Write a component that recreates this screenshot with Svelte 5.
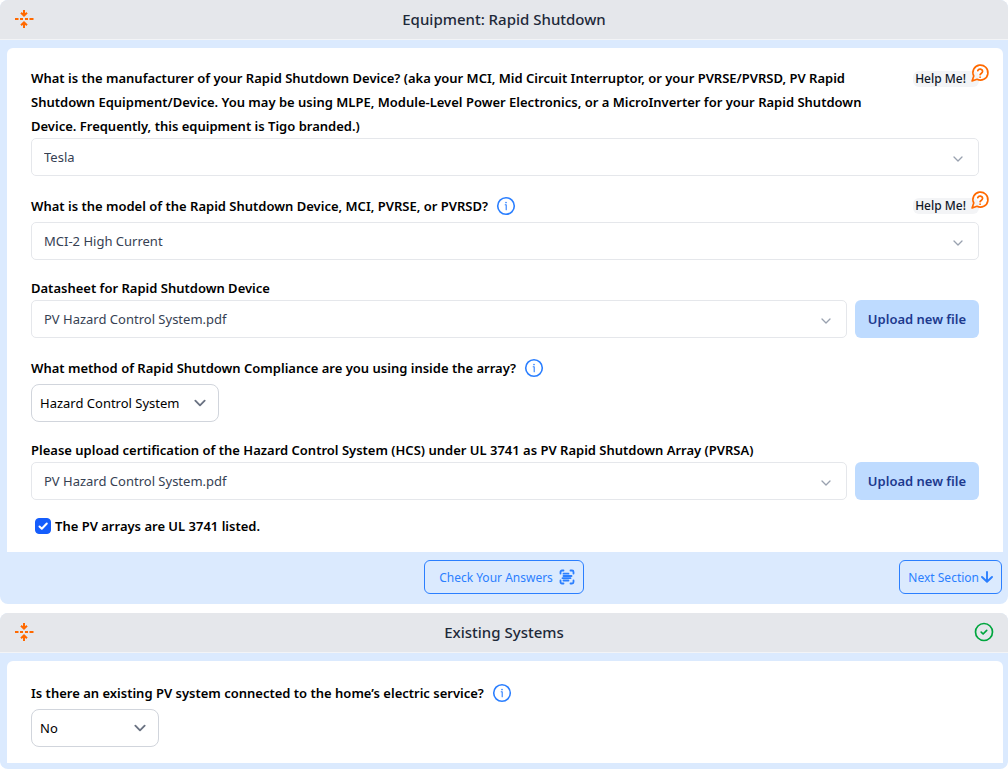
<script lang="ts">
	let manufacturer = $state('Tesla');
	let model = $state('MCI-2 High Current');
	let datasheet = $state('PV Hazard Control System.pdf');
	let method = $state('Hazard Control System');
	let certification = $state('PV Hazard Control System.pdf');
	let arraysListed = $state(true);
	let existingSystem = $state('No');
</script>

{#snippet chevron()}
	<svg class="chevron" viewBox="0 0 12 12" aria-hidden="true">
		<path d="M2 4l4 4 4-4" />
	</svg>
{/snippet}

{#snippet info()}
	<button class="icon-button" type="button" aria-label="More information">
		<svg class="info" viewBox="0 0 20 20">
			<circle cx="10" cy="10" r="8.3" />
			<path d="M9.2 8.8h1v5" />
			<circle class="dot" cx="10" cy="6.6" r="0.8" />
		</svg>
	</button>
{/snippet}

{#snippet help()}
	<button class="help" type="button">
		Help Me!
		<svg viewBox="0 0 24 24" aria-hidden="true">
			<path d="M7.9 20A9 9 0 1 0 4 16.1L2 22Z" transform="translate(0.5 -0.5)" />
			<path d="M9.3 9.2a3 3 0 0 1 5.8 1c0 2-3 2.6-3 4" />
			<path d="M12.1 17h.01" />
		</svg>
	</button>
{/snippet}

{#snippet collapse()}
	<button class="icon-button collapse" type="button" aria-label="Collapse section">
		<svg viewBox="0 0 20 20">
			<path d="M1 10h3.5M6 10h3M11 10h3M15.5 10H19.500" />
			<path d="M10 1v5M7 3.800l3 2.800 3-2.800M10 19v-5M7 16.200l3-2.800 3 2.800" />
		</svg>
	</button>
{/snippet}

<main>
	<section>
		<header>
			{@render collapse()}
			<h2>Equipment: Rapid Shutdown</h2>
		</header>

		<div class="card">
			<div class="field">
				<div class="question">
					<label for="manufacturer">What is the manufacturer of your Rapid Shutdown Device? (aka your MCI, Mid Circuit Interruptor, or your PVRSE/PVRSD, PV Rapid Shutdown Equipment/Device. You may be using MLPE, Module-Level Power Electronics, or a MicroInverter for your Rapid Shutdown Device. Frequently, this equipment is Tigo branded.)</label>
					{@render help()}
				</div>
				<div class="select">
					<select id="manufacturer" bind:value={manufacturer}>
						<option>Tesla</option>
					</select>
					{@render chevron()}
				</div>
			</div>

			<div class="field">
				<div class="question with-info">
					<label for="model">What is the model of the Rapid Shutdown Device, MCI, PVRSE, or PVRSD?</label>
					{@render info()}
					{@render help()}
				</div>
				<div class="select">
					<select id="model" bind:value={model}>
						<option>MCI-2 High Current</option>
					</select>
					{@render chevron()}
				</div>
			</div>

			<div class="field">
				<div class="question">
					<label for="datasheet">Datasheet for Rapid Shutdown Device</label>
				</div>
				<div class="file-row">
					<div class="select">
						<select id="datasheet" bind:value={datasheet}>
							<option>PV Hazard Control System.pdf</option>
						</select>
						{@render chevron()}
					</div>
					<button class="upload" type="button">Upload new file</button>
				</div>
			</div>

			<div class="field">
				<div class="question with-info">
					<label for="method">What method of Rapid Shutdown Compliance are you using inside the array?</label>
					{@render info()}
				</div>
				<div class="select compact">
					<select id="method" bind:value={method}>
						<option>Hazard Control System</option>
					</select>
					{@render chevron()}
				</div>
			</div>

			<div class="field">
				<div class="question">
					<label for="certification">Please upload certification of the Hazard Control System (HCS) under UL 3741 as PV Rapid Shutdown Array (PVRSA)</label>
				</div>
				<div class="file-row">
					<div class="select">
						<select id="certification" bind:value={certification}>
							<option>PV Hazard Control System.pdf</option>
						</select>
						{@render chevron()}
					</div>
					<button class="upload" type="button">Upload new file</button>
				</div>
			</div>

			<div class="field check">
				<span class="tick-box">
					<input id="arrays-listed" type="checkbox" bind:checked={arraysListed} />
					<svg viewBox="0 0 16 16" aria-hidden="true">
						<path d="M4.500 8.500l2.300 2.300 5-5.300" />
					</svg>
				</span>
				<label for="arrays-listed">The PV arrays are UL 3741 listed.</label>
			</div>
		</div>

		<footer>
			<button class="outline check-answers" type="button">
				Check Your Answers
				<svg viewBox="0 0 16 16" aria-hidden="true">
					<path d="M1.500 4.500V3A1.500 1.500 0 0 1 3 1.500h1.500M11.500 1.500H13A1.500 1.500 0 0 1 14.500 3v1.500M14.500 11.500V13a1.500 1.500 0 0 1-1.500 1.500h-1.500M4.500 14.500H3A1.500 1.500 0 0 1 1.500 13v-1.500" />
					<path d="M4.500 4.700h5M4.500 7h8M3.500 9.200h8M4.500 11.500h5" />
				</svg>
			</button>
			<button class="outline next" type="button">
				Next Section
				<svg viewBox="0 0 12 12" aria-hidden="true">
					<path d="M6 1v9.500M1 6l5 4.800L11 6" />
				</svg>
			</button>
		</footer>
	</section>

	<section>
		<header>
			{@render collapse()}
			<h2>Existing Systems</h2>
			<svg class="complete" viewBox="0 0 20 20" role="img" aria-label="Section complete">
				<circle cx="10" cy="10" r="8.500" />
				<path d="M7.200 10.200l1.900 1.800 3.600-3.600" />
			</svg>
		</header>

		<div class="card">
			<div class="field">
				<div class="question with-info">
					<label for="existing">Is there an existing PV system connected to the home’s electric service?</label>
					{@render info()}
				</div>
				<div class="select compact short">
					<select id="existing" bind:value={existingSystem}>
						<option>No</option>
						<option>Yes</option>
					</select>
					{@render chevron()}
				</div>
			</div>
		</div>
		<div class="section-end"></div>
	</section>
</main>

<style>
	:global(body) {
		background: #fff;
	}

	main {
		display: flex;
		flex-direction: column;
		gap: 9px;
		font-family: 'Segoe UI', 'Noto Sans', sans-serif;
		font-size: 13px;
		color: #000;
	}

	section {
		background: #dbeafe;
		border-radius: 8px;
		overflow: hidden;
	}

	header {
		display: grid;
		grid-template-columns: 20px 1fr 20px;
		align-items: center;
		box-sizing: border-box;
		height: 40px;
		padding: 0 14px;
		background: #e5e7eb;
		border-bottom: 1px solid #f3f4f6;
	}

	h2 {
		margin: 0;
		padding-bottom: 2px;
		font-size: 15px;
		font-weight: 500;
		line-height: 24px;
		text-align: center;
		color: #1e2939;
	}

	button,
	select {
		font: inherit;
	}

	button {
		cursor: pointer;
	}

	svg {
		fill: none;
		stroke: currentColor;
		stroke-linecap: round;
		stroke-linejoin: round;
	}

	.icon-button {
		display: flex;
		padding: 0;
		border: 0;
		background: none;
		color: #2b7fff;
	}

	.icon-button svg {
		width: 20px;
		height: 20px;
	}

	.collapse {
		margin-bottom: 2px;
		color: #ff6900;
	}

	.collapse svg {
		stroke-width: 2;
		stroke-linecap: butt;
		stroke-linejoin: miter;
	}

	.info {
		stroke-width: 1.6;
	}

	.info path {
		stroke-width: 1.1;
	}

	.info .dot {
		fill: currentColor;
		stroke: none;
	}

	.complete {
		width: 20px;
		height: 20px;
		margin-bottom: 2px;
		color: #00a63e;
		stroke-width: 1.7;
	}

	.card {
		display: flex;
		flex-direction: column;
		gap: 16px;
		margin: 8px 5px 0 7px;
		padding: 18px 24px 16px;
		background: #fff;
		border-radius: 6px 6px 0 0;
	}

	.question {
		display: flex;
		align-items: flex-start;
		gap: 24px;
		font-weight: 600;
		line-height: 24px;
	}

	.with-info {
		align-items: center;
		gap: 8px;
		height: 28px;
		margin-bottom: 2px;
	}

	.help {
		position: relative;
		flex: none;
		margin: 5px 0 0 auto;
		padding: 0 13px 0 2px;
		border: 0;
		border-radius: 6px;
		background: #f3f4f6;
		font-size: 12px;
		font-weight: 500;
		line-height: 16px;
		color: #101828;
	}

	.with-info .help {
		margin-top: 0;
	}

	.help svg {
		position: absolute;
		top: -8px;
		right: -11px;
		width: 20px;
		height: 20px;
		color: #ff6900;
		stroke-width: 2;
	}

	.select {
		display: grid;
		flex: 1;
		align-items: center;
	}

	.select select {
		grid-area: 1 / 1;
		appearance: none;
		box-sizing: border-box;
		width: 100%;
		height: 38px;
		padding: 0 40px 0 12px;
		border: 1px solid #e5e7eb;
		border-radius: 5px;
		background: #fff;
		color: #364153;
	}

	.chevron {
		grid-area: 1 / 1;
		justify-self: end;
		width: 12px;
		height: 12px;
		margin: 4px 15px 0 0;
		color: #99a1af;
		stroke-width: 1.3;
		pointer-events: none;
	}

	.compact {
		width: 188px;
	}

	.short {
		width: 128px;
	}

	.compact select {
		padding: 0 30px 0 8px;
		border-color: #d1d5dc;
		border-radius: 8px;
		color: #000;
	}

	.compact .chevron {
		width: 14px;
		height: 14px;
		margin: 0 12px 0 0;
		color: #6a7282;
		stroke-width: 1.6;
	}

	.file-row {
		display: flex;
		gap: 8px;
	}

	.upload {
		width: 124px;
		padding: 0;
		border: 0;
		border-radius: 6px;
		background: #bedbff;
		font-weight: 600;
		color: #1c398e;
	}

	.check {
		display: flex;
		align-items: center;
		gap: 4px;
		padding-left: 4px;
		font-weight: 600;
		line-height: 20px;
	}

	.tick-box {
		display: grid;
		width: 16px;
		height: 16px;
	}

	.tick-box input {
		grid-area: 1 / 1;
		appearance: none;
		width: 16px;
		height: 16px;
		margin: 0;
		border: 1px solid #d1d5dc;
		border-radius: 4px;
	}

	.tick-box input:checked {
		border-color: #155dfc;
		background: #155dfc;
	}

	.tick-box svg {
		grid-area: 1 / 1;
		color: #fff;
		stroke-width: 2;
		pointer-events: none;
	}

	footer {
		display: grid;
		grid-template-columns: 1fr auto 1fr;
		padding: 8px 6px 10px;
	}

	.outline {
		display: flex;
		align-items: center;
		box-sizing: border-box;
		height: 34px;
		border: 1px solid #2b7fff;
		border-radius: 6px;
		background: none;
		font-size: 12px;
		font-weight: 400;
		color: #2b7fff;
	}

	.check-answers {
		grid-column: 2;
		gap: 6px;
		padding: 0 8px 0 14px;
	}

	.check-answers svg {
		width: 16px;
		height: 16px;
		stroke-width: 1.8;
	}

	.next {
		justify-self: end;
		gap: 2px;
		padding: 0 8px;
	}

	.next svg {
		width: 12px;
		height: 12px;
		stroke-width: 1.9;
	}

	.section-end {
		height: 6px;
	}
</style>
